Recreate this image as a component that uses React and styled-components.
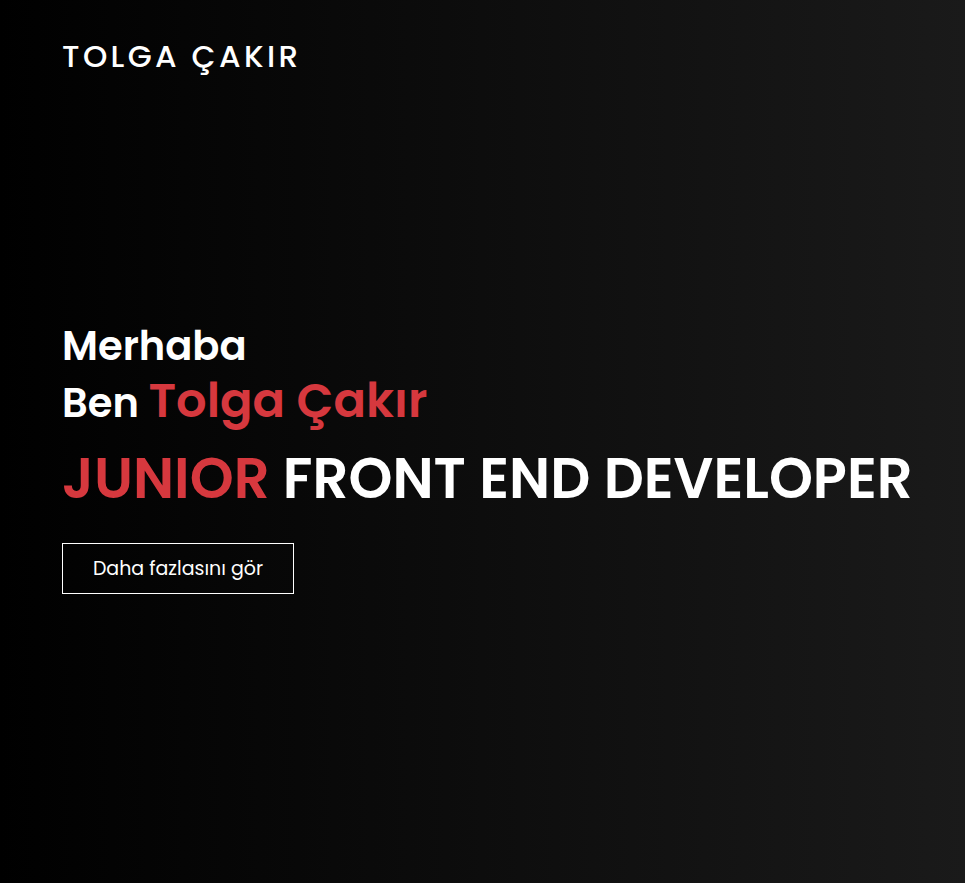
import React from "react";
import styled, { createGlobalStyle } from "styled-components";

const Global = createGlobalStyle`
  html, body { margin: 0; padding: 0; }
  body { font-family: "Poppins", "Inter", sans-serif; background: #000; }
  * { box-sizing: border-box; }
`;

const Page = styled.div`
  min-height: 883px;
  background: linear-gradient(to right, #000000 0%, #0d0d0d 50%, #1a1a1a 100%);
  color: #fff;
  padding: 0 62px;
  display: flex;
  flex-direction: column;
`;

const Header = styled.header`
  padding-top: 38px;
  height: 100px;
`;

const Logo = styled.div`
  font-size: 31px;
  font-weight: 500;
  letter-spacing: 3.4px;
  line-height: 36px;
  white-space: nowrap;
`;

const Hero = styled.section`
  margin-top: 218px;
  display: flex;
  flex-direction: column;
  align-items: flex-start;
`;

const Greeting = styled.h2`
  margin: 0;
  font-size: 40px;
  font-weight: 600;
  line-height: 57px;
  white-space: nowrap;
`;

const Accent = styled.span`
  color: #d6383e;
  font-weight: 600;
  font-size: ${p => p.$size || "inherit"};
  line-height: 1;
`;

const Title = styled.h1`
  margin: 9px 0 0;
  font-size: 56px;
  font-weight: 600;
  line-height: 76px;
  white-space: nowrap;
`;

const Button = styled.button`
  margin-top: 26px;
  width: 232px;
  height: 51px;
  background: transparent;
  border: 1px solid #fff;
  color: #fff;
  font-family: inherit;
  font-size: 19px;
  font-weight: 400;
  cursor: pointer;
`;

export default function App() {
  return (
    <>
      <Global />
      <Page>
        <Header>
          <Logo>TOLGA ÇAKIR</Logo>
        </Header>
        <Hero>
          <Greeting>Merhaba</Greeting>
          <Greeting>
            Ben <Accent $size="48px">Tolga Çakır</Accent>
          </Greeting>
          <Title>
            <Accent>JUNIOR</Accent> FRONT END DEVELOPER
          </Title>
          <Button>Daha fazlasını gör</Button>
        </Hero>
      </Page>
    </>
  );
}
